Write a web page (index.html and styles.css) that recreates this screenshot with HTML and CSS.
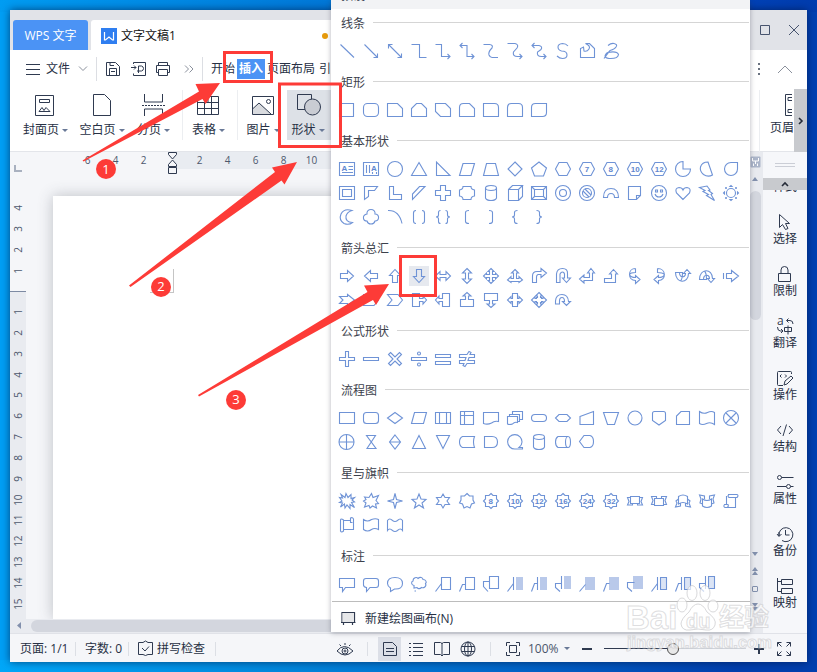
FILE: index.html
```html
<!DOCTYPE html>
<html lang="zh-CN">
<head>
<meta charset="utf-8">
<title>WPS 文字</title>
<link rel="stylesheet" href="styles.css">
</head>
<body>
<div class="window">
  <header class="titlebar">
    <div class="app-tab">WPS 文字</div>
    <div class="doc-tab">
      <svg class="logo" width="16" height="16"><rect width="16" height="16" fill="#2f7ef0"/><path d="M3.500 4v8h1l3.500-3 3.500 3h1v-8" fill="none" stroke="#fff" stroke-width="1.200"/></svg>
      <span>文字文稿1</span><i class="dot"></i>
    </div>
    <div class="win-buttons">
      <svg width="12" height="12"><path d="M1.500 1.500h9v9h-9z"/></svg>
      <svg width="12" height="12"><path d="M1 1l10 10M11 1L1 11"/></svg>
    </div>
  </header>
  <nav class="menubar">
    <svg class="burger" width="14" height="12"><path d="M0 1.500h14M0 6.500h14M0 11.500h14"/></svg>
    <span class="file">文件</span>
    <svg class="chev" width="10" height="6"><path d="M1 .5l4 4 4-4"/></svg>
    <i class="sep"></i>
    <svg class="tool" width="16" height="16"><path d="M1.500 1.500h9l4 4v9h-13zM4.500 14.500v-7h7v7M5 1.500v3h4M6 10.500h4"/></svg>
    <svg class="tool" width="16" height="16"><path d="M2.500 3v-1.500h12v13h-12v-2M0 6.500h5M3 4.500l2 2-2 2M7.500 12v-7h3q2 .5 2 2.500t-2 2.500H6"/></svg>
    <svg class="tool" width="16" height="16"><path d="M3.500 4.500v-3h9v3M3.500 11.500h-2v-7h13v7h-2M3.500 8.500h9v6h-9z"/></svg>
    <svg class="more" width="10" height="8"><path d="M1 .5l3.500 3.500L1 7.500M5.500.5L9 4 5.500 7.500"/></svg>
    <i class="sep"></i>
    <span class="tab start">开始</span><span class="tab active">插入</span><span class="tab layout">页面布局</span><span class="tab ref">引用</span>
    <span class="menu-right"><svg width="4" height="14"><path d="M1 1h2v2H1zM1 6h2v2H1zM1 11h2v2H1z" fill="#69717f" stroke="none"/></svg>
    <svg width="16" height="9"><path d="M1 8l7-7 7 7"/></svg></span>
  </nav>
  <section class="ribbon">
    <div class="tool-btn cover"><svg width="24" height="26"><path d="M3.500 3.500h18v20h-18zM7.500 7.500h10v3h-10zM7 19.500l3-4 2 3 2-3 4 4z"/></svg><b>封面页</b></div>
    <div class="tool-btn blank"><svg width="24" height="26"><path d="M3.500 2.500h11l6 6v15h-17z"/></svg><b>空白页</b></div>
    <div class="tool-btn break"><svg width="24" height="26"><path d="M3.500 2v8h18v-8M3.500 24v-7h18v7"/><path d="M1 13.500h23" stroke-dasharray="2 1"/></svg><b>分页</b></div>
    <div class="tool-btn table"><svg width="24" height="26"><path d="M1.500 4.500h21v18h-21zM1.500 10.500h21M1.500 16.500h21M8.500 10.500v12M15.500 4.500v18M12 4.500v6"/></svg><b>表格</b></div>
    <div class="tool-btn photo"><svg width="24" height="26"><path d="M1.500 17l7-6 12 11.500H1.500z" fill="#d9dbdf" stroke="none"/><path d="M1.500 4.500h21v18h-21zM1.500 17l6.500-6 12 11"/><circle cx="17.500" cy="9.500" r="2"/></svg><b>图片</b></div>
    <div class="tool-btn shape"><svg width="26" height="26"><path d="M2.500 2.500h14v15h-14z"/><circle cx="17.500" cy="15" r="8" fill="#c9ccd3"/></svg><b>形状</b></div>
    <div class="ribbon-right">
      <div class="head-btn"><svg width="8" height="23"><path d="M8 1.500H1.500v21H8M8 4.500H4v3h4M8 16.500H4v3h4"/></svg><span>页眉</span></div>
      <div class="next"><svg width="5" height="8"><path d="M1 1l3 3-3 3"/></svg></div>
    </div>
  </section>
  <main class="body">
    <div class="canvas">
      <div class="hruler">
        <span>6</span><span>4</span><span>2</span><span class="marker"><svg width="11" height="24"><path d="M1.500.5h8v2L5.500 7l-4-4.500zM5.500 8l4 4.500v2h-8v-2zM1.500 15.500h8v6h-8z" fill="#f5f6f9"/></svg></span><span>2</span><span>4</span><span>6</span><span>8</span><span>10</span>
      </div>
      <div class="doc-row">
        <div class="vruler">
          <div class="vmargin"><span>4</span><span>3</span><span>2</span><span>1</span></div>
          <div class="vtext"><span>1</span><span>2</span><span>3</span><span>4</span><span>5</span><span>6</span><span>7</span><span>8</span><span>9</span><span>10</span><span>11</span><span>12</span><span>13</span><span>14</span><span>15</span></div>
        </div>
        <div class="page"><i class="crop"></i></div>
      </div>
      <div class="hscroll"><svg width="5" height="8"><path d="M4 0v7L0 3.500z"/></svg><i></i></div>
    </div>
    <div class="vscroll">
      <svg class="view" width="11" height="12"><rect x=".5" y=".5" width="10" height="11" rx="1" fill="#abb5c9"/><path d="M2.500 2v3h6V2M3.500 10V7.500M7.500 10V7.500M5.500 5v3" fill="none" stroke="#fff"/></svg>
      <svg class="up" width="6" height="4"><path d="M0 4l3-4 3 4z"/></svg>
      <i class="thumb"></i>
      <svg class="down" width="6" height="4"><path d="M0 0l3 4 3-4z"/></svg>
      <svg class="dbl" width="6" height="8"><path d="M0 4l3-4 3 4zM0 8l3-4 3 4z"/></svg>
      <i class="ball"></i>
      <svg class="dbl2" width="6" height="8"><path d="M0 0l3 4 3-4zM0 4l3 4 3-4z"/></svg>
    </div>
    <aside class="side">
      <i class="grip"></i>
      <div class="side-up"><svg width="8" height="5"><path d="M1 4l3-3 3 3"/></svg></div>
      <div class="cut"><span>样式</span></div>
      <div class="side-item"><svg width="18" height="18"><path d="M3.500 1.500v13l3-3 3 5 2.500-1-2.500-5h4z"/></svg>选择</div>
      <div class="side-item"><svg width="18" height="18"><path d="M2.500 8.500h12v8h-12zM5 8.500V5q0-3.500 3.500-3.500T12 5v3.500"/></svg>限制</div>
      <div class="side-item"><svg width="18" height="18"><text x="1" y="8" font-size="12">a</text><path d="M8.500 10.500h7v4h-7zM12 8.500v9M17 7q0-3.500-3-3.500h-3M12.500 1.500l-2 2 2 2M1.500 10q0 4 3 4h2M5 12l2 2-2 2"/></svg>翻译</div>
      <div class="side-item"><svg width="18" height="18"><path d="M7 16.500H2.500q-1 0-1-1v-12q0-1 1-1h12q1 0 1 1V5M5.500 5.500L4 7l1.500 1.500M9 5.500L10.500 7 9 8.500M8 16l1-4 6-5 2 2-6 6z"/></svg>操作</div>
      <div class="side-item"><svg width="18" height="18"><path d="M5 5L1.500 9 5 13M13 5l3.500 4L13 13M10.500 3.500L7 15"/></svg>结构</div>
      <div class="side-item"><svg width="18" height="18"><path d="M5.500 4.500h12M1 13.500h9"/><circle cx="3.500" cy="4.500" r="2"/><circle cx="12.500" cy="13.500" r="2"/><path d="M14.500 13.500h3"/></svg>属性</div>
      <div class="side-item"><svg width="18" height="18"><path d="M3 11A7 7 0 1 1 6 15.500M3 11V7M1 9l2 2.500L5.500 9M9.500 5v5h4"/></svg>备份</div>
      <div class="side-item"><svg width="18" height="18"><path d="M1.500 1v13.500H5M1.500 4.500H5M5.500 2.500h11v5h-11zM5.500 11.500h11v5h-11z"/></svg>映射</div>
      <i class="side-line"></i>
    </aside>
  </main>
  <footer class="status">
    <span class="st pages">页面: 1/1</span><span class="st words">字数: 0</span>
    <span class="st spell"><svg width="16" height="15"><path d="M5 1.500H.5v12H5l2.500 1 2.500-1h4.500v-12H10L7.500 0zM4 7l3 3 4-4.500" /></svg>拼写检查</span>
    <svg class="eye" width="18" height="16"><path d="M1 10q7-9 16 0-8 8-16 0zM9 2v2M3.500 3.500L5 5M14.500 3.500L13 5"/><circle cx="9" cy="10" r="3"/><circle cx="9" cy="10" r="1"/></svg>
    <i class="ssep"></i>
    <span class="on"><svg width="16" height="16"><path d="M1.500 1.500h9l4 4v9h-13zM4 7.500h8M4 10.500h8"/></svg></span>
    <svg class="outline" width="16" height="16"><path d="M5 2.500h10M5 6.500h10M5 10.500h10M5 14.500h10M1 2.500h2M1 6.500h2M1 10.500h2M1 14.500h2"/></svg>
    <svg class="book" width="16" height="16"><path d="M.5 1.500h6l1.500 1 1.500-1h6v12H9.500L8 15l-1.500-1.500h-6zM8 2v13"/></svg>
    <svg class="globe" width="16" height="16"><circle cx="8" cy="8" r="7"/><ellipse cx="8" cy="8" rx="3.500" ry="7"/><path d="M1.500 5.500h13M1.500 10.500h13M8 1v14"/></svg>
    <i class="ssep two"></i>
    <svg class="fit" width="16" height="16"><path d="M1.500 5V1.500H5M11 1.500h3.500V5M14.500 11v3.500H11M5 14.500H1.500V11M4.500 4.500h7v7h-7z"/></svg>
    <span class="zoom">100%</span>
    <i class="minus"></i><div class="slider"><i class="knob"></i></div><i class="plus"></i>
    <svg class="full" width="16" height="16"><path d="M1.500 5.500v-4h4M1.500 1.500l4 4M10.500 1.500h4v4M14.500 1.500l-4 4M1.500 10.500v4h4M1.500 14.500l4-4M14.500 10.500v4h-4M14.500 14.500l-4-4"/></svg>
  </footer>
</div>

<div class="popup">
  <div class="preset"><span>预设</span></div>
  <section><h3>线条</h3><div class="shapes">
    <svg><path d="M1.500 1.500l13.500 13"/></svg>
    <svg><path d="M1.500 1.500l13 13M14.500 10.500v4h-4"/></svg>
    <svg><path d="M1.500 1.500l13 13M14.500 10.500v4h-4M1.500 5.500v-4h4"/></svg>
    <svg><path d="M.5 1.500h8v13h7"/></svg>
    <svg><path d="M.5 1.500h6v12h8.500M12.500 11l2.500 2.500-2.500 2.500"/></svg>
    <svg><path d="M1 2.500h7v11h7M3.500 0L1 2.500 3.500 5M12.500 11l2.500 2.500-2.500 2.500"/></svg>
    <svg><path d="M.5 1.500h6q4 .5 2.500 3.500Q5 9 6 12q1 2.500 3 2.500h6"/></svg>
    <svg><path d="M.5.5H8q4 1 2 4.500L6.500 9q-1 4.500 4 4.500h4M12.500 11l2.500 2.500-2.500 2.500"/></svg>
    <svg><path d="M1 2.500h7q4 1 2 4L6.500 9q-1 4.500 4 4.500h4.500M3.500 0L1 2.500 3.500 5M12.500 11l2.500 2.500-2.500 2.500"/></svg>
    <svg><path d="M13 3Q11 .5 7.500.5 3 1 3 4t3.500 4Q12 8 12 12q0 3.500-4.500 3.500-3 0-5.500-2.500"/></svg>
    <svg><path d="M1.500 14.500v-9L4.500 4l.5 4q3 1 5-2 2-3-3.500-5.500h4L15.500 5.500v9z"/></svg>
    <svg><path d="M5 2.500q3-2.500 6-2 4 1 2 3.500-1 2-6 3.500L1 15.500M4.500 9.500Q-1 14.500 6 15.500q9 .5 9.500-4Q14 7.500 4.500 9.500"/></svg>
  </div></section>
  <section><h3>矩形</h3><div class="shapes">
    <svg><path d="M.5 1.500h14v13H.5z"/></svg>
    <svg><rect x=".5" y="1.500" width="15" height="13" rx="4"/></svg>
    <svg><path d="M.5 1.500h10l5 5v8H.5z"/></svg>
    <svg><path d="M.5 14.500v-8l5-5h5l5 5v8z"/></svg>
    <svg><path d="M.5 1.500h10l5 5v8h-10l-5-5z"/></svg>
    <svg><path d="M.5 14.500v-9q0-4 4-4h6l5 5v8z"/></svg>
    <svg><path d="M.5 1.500h11q4 0 4 4v9H.5z"/></svg>
    <svg><path d="M.5 14.500v-9q0-4 4-4h7q4 0 4 4v9z"/></svg>
    <svg><path d="M4.500 1.500h11v9q0 4-4 4H.5v-9q0-4 4-4z"/></svg>
  </div></section>
  <section><h3>基本形状</h3><div class="shapes">
    <svg><path d="M.5 1.500h15v13H.5zM9.500 5.500H14M9.500 8.500H14M3 11.500h11"/><text x="2.500" y="9.500">A</text></svg>
    <svg><path d="M.5 1.500h15v13H.5zM3.500 4v8M6.500 4v8M9.500 11v2M13.500 11v2"/><text x="8" y="10">A</text></svg>
    <svg><circle cx="8" cy="8" r="7.500"/></svg>
    <svg><path d="M8 1.500l7.500 13H.5z"/></svg>
    <svg><path d="M1.500 1v13.500H15z"/></svg>
    <svg><path d="M4 2.500h11.500l-3.500 12H.5z"/></svg>
    <svg><path d="M3.500 2.500h9l3 12H.5z"/></svg>
    <svg><path d="M8 1l7 7-7 7-7-7z"/></svg>
    <svg><path d="M8 1l7.500 6-3 8h-9l-3-8z"/></svg>
    <svg><path d="M4 1.500h8L15.500 8 12 14.500H4L.5 8z"/></svg>
    <svg><path d="M4 1.500h8L15.500 8 12 14.500H4L.5 8z"/><text x="5.800" y="11">7</text></svg>
    <svg><path d="M4 1.500h8L15.500 8 12 14.500H4L.5 8z"/><text x="5.500" y="11">8</text></svg>
    <svg><path d="M4 1.500h8L15.500 8 12 14.500H4L.5 8z"/><text x="3.700" y="11">10</text></svg>
    <svg><path d="M4 1.500h8L15.500 8 12 14.500H4L.5 8z"/><text x="3.700" y="11">12</text></svg>
    <svg><path d="M8 .5V8h7.500A7.500 7.500 0 1 1 8 .5z"/></svg>
    <svg><path d="M9 1L13.500 14Q9 16.500 4.500 13.500 .5 10 1.500 6 3 1 9 1z"/></svg>
    <svg><path d="M14.500 1.500V8A6.500 6.500 0 1 1 8 1.500z"/></svg>
    <svg><path d="M.5 1.500h15v13H.5zM3.500 4.500h9v7h-9z"/></svg>
    <svg><path d="M1.500 14.500v-13h13l-3 4h-6v6z"/></svg>
    <svg><path d="M2.500 1.500h4v8h8v5h-12z"/></svg>
    <svg><path d="M1.500 14.500V9l7-7.500H14z"/></svg>
    <svg><path d="M5.500.5h5v5h5v5h-5v5h-5v-5h-5v-5h5z"/></svg>
    <svg><path d="M4 1.500h8q0 3 3.500 3.500v6q-3.500.5-3.500 3.500H4Q4 11.500.5 11V5Q4 4.500 4 1.500z"/></svg>
    <svg><ellipse cx="8" cy="3" rx="5.500" ry="2.500"/><path d="M2.500 3v10q1 2.500 5.500 2.500t5.500-2.500V3"/></svg>
    <svg><path d="M1.500 4.500h10v11h-10zM1.500 4.500l4-4h10l-4 4M15.500.5v11l-4 4"/></svg>
    <svg><path d="M.5 1.500h15v13H.5zM3.500 4.500h9v7h-9zM.5 1.500l3 3M15.500 1.500l-3 3M.5 14.500l3-3M15.500 14.500l-3-3"/></svg>
    <svg><circle cx="8" cy="8" r="7.500"/><circle cx="8" cy="8" r="3.500"/></svg>
    <svg><circle cx="8" cy="8" r="7.500"/><circle cx="8" cy="8" r="4.500"/><path d="M4 6l6 6M6 4l6 6"/></svg>
    <svg><path d="M.5 12.500Q.5 3.500 8 3.500t7.500 9h-4q0-4-3.500-4t-3.500 4z"/></svg>
    <svg><path d="M1.500 1.500h12v9l-4 4h-8zM9.500 14.500v-4h4"/></svg>
    <svg><circle cx="8" cy="8" r="7.500"/><path d="M4 9q1 3 4 3t4-3M4.500 5h2v2h-2zM9.500 5h2v2h-2z"/></svg>
    <svg><path d="M8 14.500L1.500 8Q-.5 3 4 2.500q3 0 4 2.500 1-2.500 4-2.500 4.500.5 2.500 5.500z"/></svg>
    <svg><path d="M.5 2.500L8 1l3 4-1.500.5 4 3-1.500 1 3.500 6-8-5 2-1-5.500-3 2-1z"/></svg>
    <svg><circle cx="8" cy="8" r="4.500"/><path d="M7 1.500l1-1 1 1zM7 14.500l1 1 1-1zM1.500 7l-1 1 1 1zM14.500 7l1 1-1 1zM2 3h2M3 2v2M12 3h2M13 2v2M2 13h2M3 12v2M12 13h2M13 12v2"/></svg>
    <svg><path d="M13 1.500Q5-1 2 5-.5 11 5 14.500q5 2 8.500-1Q6 13 7 7q1-4 6-5.500z"/></svg>
    <svg><path d="M4 5C3-1 13-1 12 5c5 0 4.500 7 0 7-1 4-7 4-8 0C-.500 12-1 6 4 5z"/></svg>
    <svg><path d="M1 1.500Q12 1 15 14.500"/></svg>
    <svg><path d="M5 1.500q-2.500 0-2.500 2.500v8q0 2.500 2.500 2.500M11 1.500q2.500 0 2.500 2.500v8q0 2.500-2.500 2.500"/></svg>
    <svg><path d="M5.500 1.500q-2 0-2 2V6q0 2-2.500 2 2.500 0 2.500 2v2.500q0 2 2 2M10.500 1.500q2 0 2 2V6q0 2 2.500 2-2.500 0-2.500 2v2.500q0 2-2 2"/></svg>
    <svg><path d="M10 1.500q-3.500 0-3.500 2v9q0 2 3.500 2"/></svg>
    <svg><path d="M6 1.500q3.500 0 3.500 2v9q0 2-3.500 2"/></svg>
    <svg><path d="M10.500 1.500q-3 0-3 2V6q0 2-2.500 2 2.500 0 2.500 2v2.500q0 2 3 2"/></svg>
    <svg><path d="M5.500 1.500q3 0 3 2V6q0 2 2.500 2-2.500 0-2.500 2v2.500q0 2-3 2"/></svg>
  </div></section>
  <section><h3>箭头总汇</h3><div class="shapes">
    <svg><path d="M1.500 5.500h7v-3L14.500 8l-6 5.500v-3h-7z"/></svg>
    <svg><path d="M14.500 5.500h-7v-3L1.500 8l6 5.500v-3h7z"/></svg>
    <svg><path d="M5.500 14.500v-7h-3L8 1.500l5.500 6h-3v7z"/></svg>
    <svg class="chosen"><path d="M5.500 1.500v7h-3L8 14.500l5.500-6h-3v-7z"/></svg>
    <svg><path d="M.5 8L5 3.500v3h6v-3L15.500 8 11 12.500v-3H5v3z"/></svg>
    <svg><path d="M8 .5L12.500 5h-3v6h3L8 15.500 3.500 11h3V5h-3z"/></svg>
    <svg><path d="M8 .5L11 3.500H9.500v3h3V5L15.500 8l-3 3V9.500h-3v3H11L8 15.500l-3-3h1.500v-3h-3V11L.5 8l3-3v1.500h3v-3H5z"/></svg>
    <svg><path d="M8 1.500L11.500 5h-2v5.500H12v-2l3.500 3.500-3.500 2.500v-1H4v1L.5 12 4 8.500v2h2.500V5h-2z"/></svg>
    <svg><path d="M1.500 14.500V8q0-4.500 4.500-4.500h4v-3L15.500 5 10 9.500v-3H7Q5.500 7 5.500 9v5.500z"/></svg>
    <svg><path d="M1.500 14.500V6Q2 .5 7.500.5T12.500 6v4h3L11.500 14.500 7.500 10h2V6q-.5-2-2-2t-2.500 2v8.500z"/></svg>
    <svg><path d="M12 .5L15.500 5h-2v7.500H5v2.500L.5 11 5 7v2.500h5.500V5h-2z"/></svg>
    <svg><path d="M10.500 1.500L14.500 6h-2v8.500H1.500v-4h7V6h-2z"/></svg>
    <svg><path d="M8.500.5C.5.5.5 12.500 8.500 12.500v3l4.500-4-4.500-4v2C5 9.500 3 8 2.500 6.500M8.500.5v4C5 4.500 3 5.500 2.500 6.500"/></svg>
    <svg><path d="M6.500.5c9 0 9 12 1 12v3l-4.500-4 4.500-4v2c3.500 0 5.500-1.500 6-3M6.500.5v4c4 0 6 1 7 2"/></svg>
    <svg><path d="M.5 4.500h4C4.500 10 10.500 10 10.500 5.500h-2l3.500-4 3.500 4h-2C13.500 16 .5 16 .5 4.500zM4.500 4.500h3c0 4-.500 7-2 8.500"/></svg>
    <svg><path d="M.5 11.500h4C4.500 6 10.500 6 10.500 10.500h-2l3.500 4 3.500-4h-2C13.500 0 .5 0 .5 11.500zM4.500 11.500h3c0-4-.500-7-2-8.500"/></svg>
    <svg><path d="M.5 5v6M3.500 5.500h5v-3l7 5.500-7 5.500v-3h-5z"/></svg>
    <svg><path d="M.5 4.500h8v-2L15.500 8l-7 5.500v-2h-8L4 8z"/></svg>
    <svg><path d="M.5 2.500H11L15.500 8 11 13.500H.5z"/></svg>
    <svg><path d="M.5 2.500H11L15.500 8 11 13.500H.5L5 8z"/></svg>
    <svg><path d="M1.500 1.500h7v5H12V4l3.500 4L12 12V9.500H8.500v5h-7z"/></svg>
    <svg><path d="M14.500 1.500h-7v5H4V4L.5 8 4 12V9.500h3.500v5h7z"/></svg>
    <svg><path d="M1.500 14.500v-7h5V4H4L8 .5 12 4H9.500v3.500h5v7z"/></svg>
    <svg><path d="M1.500 1.500v7h5V12H4l4 3.500 4-3.500H9.500V8.500h5v-7z"/></svg>
    <svg><path d="M5.500 1.500h5v5H12v-2L15.500 8 12 11.500v-2h-1.500v5h-5v-5H4v2L.5 8 4 4.500v2h1.500z"/></svg>
    <svg><path d="M8 .5L11.500 4h-2v1.500h1v1H12v-2L15.500 8 12 11.500v-2h-1.500v1h-1V12h2L8 15.500 4.500 12h2v-1.500h-1v-1H4v2L.5 8 4 4.500v2h1.500v-1h1V4h-2z"/></svg>
    <svg><path d="M.5 9Q1 2.500 7 2.500t6.500 7h2l-4 4-4-4h2q0-4-2.500-4T4.500 9v3h-4z"/></svg>
  </div></section>
  <section><h3>公式形状</h3><div class="shapes">
    <svg><path d="M6.500.5h3v6h6v3h-6v6h-3v-6h-6v-3h6z"/></svg>
    <svg><path d="M.5 6.500h15v3H.5z"/></svg>
    <svg><path d="M3.500 1.500L8 6l4.500-4.500 2 2L10 8l4.500 4.500-2 2L8 10l-4.500 4.500-2-2L6 8 1.500 3.500z"/></svg>
    <svg><path d="M.5 6.500h15v3H.5z"/><circle cx="8" cy="2.500" r="1.500"/><circle cx="8" cy="13.500" r="1.500"/></svg>
    <svg><path d="M.5 3.500h15v3H.5zM.5 10.500h15v3H.5z"/></svg>
    <svg><path d="M.5 3.500H8l2-3 2 1-1 2h4.500v3H10l-1 3h6.500v3H8l-2 3-2-1 1-2H.5v-3H6l1-3H.5z"/></svg>
  </div></section>
  <section><h3>流程图</h3><div class="shapes">
    <svg><path d="M.5 2.500h15v11H.5z"/></svg>
    <svg><rect x=".5" y="2.500" width="15" height="11" rx="3"/></svg>
    <svg><path d="M8 2.500L15.500 8 8 13.500.5 8z"/></svg>
    <svg><path d="M3.500 2.500h12l-3 11H.5z"/></svg>
    <svg><path d="M.5 2.500h15v11H.5zM4.500 2.500v11M11.500 2.500v11"/></svg>
    <svg><path d="M1.500 1.500h13v13h-13zM5.500 1.500v13M1.500 5.500h13"/></svg>
    <svg><path d="M.5 2.500h15v9q-4-1-7 1.500-4 2-8 .5z"/></svg>
    <svg><path d="M.5 6.500h10v6q-3-1-5 1.500-3 1-5 0zM2.500 6V4.500h10v7h-2M5.500 4V1.500h10v8h-3"/></svg>
    <svg><rect x=".5" y="4.500" width="15" height="7" rx="3.500"/></svg>
    <svg><path d="M4 4.500h8l3.500 3.500-3.500 3.500H4L.5 8z"/></svg>
    <svg><path d="M1 6.500l13.500-5v13H1z"/></svg>
    <svg><path d="M.5 2.500h15l-4 12h-7z"/></svg>
    <svg><circle cx="8" cy="8" r="7"/></svg>
    <svg><path d="M3.500 1.500h9q2 0 2 2v7L8 15l-6.500-4.500v-7q0-2 2-2z"/></svg>
    <svg><path d="M6 1.500h8.500v13h-13V6z"/></svg>
    <svg><path d="M.5 1.500q4 3 8 1t7 0v12q-4-3-8-1t-7 0z"/></svg>
    <svg><circle cx="8" cy="8" r="7.500"/><path d="M3 3l10 10M13 3L3 13"/></svg>
    <svg><circle cx="7.500" cy="8" r="7.500"/><path d="M7.500.5v15M0 8h15"/></svg>
    <svg><path d="M3.500 1.500h9L4 14.500h9z"/></svg>
    <svg><path d="M8 1l5.500 7L8 15 2.500 8zM2.500 8h11"/></svg>
    <svg><path d="M8 1.500l6.500 13h-13z"/></svg>
    <svg><path d="M8 14.500l6.500-13h-13z"/></svg>
    <svg><path d="M3.500 2.500h12q-2 5 0 11h-12Q.5 12 .5 8t3-5.500z"/></svg>
    <svg><path d="M1.500 2.500H9q5.500 0 5.500 5.500T9 13.500H1.500z"/></svg>
    <svg><path d="M15.500 13.500v1.500H8a7.200 7.200 0 1 1 7-7q0 3-3 5.500z"/></svg>
    <svg><ellipse cx="8" cy="3" rx="5.500" ry="2.500"/><path d="M2.500 3v10q1 2.500 5.500 2.500t5.500-2.500V3"/></svg>
    <svg><path d="M13 2.500H3Q.5 4 .5 8T3 13.500h10"/><ellipse cx="13" cy="8" rx="2.500" ry="5.500"/></svg>
    <svg><path d="M5 1.500h6q3.500 1 3.500 6T11 13.500H5L.5 7.500z"/></svg>
  </div></section>
  <section><h3>星与旗帜</h3><div class="shapes">
    <svg><path d="M2 1.500l4 3 1-4 2 4 3-3v4l3.500-1L13 7l2.500 2-3 .5 3 5-4.500-3 0 4L8 12l-2 3-.500-4-4 3 2-4-3-.5L3 8 .5 4.500l3 .5z"/></svg>
    <svg><path d="M1.500 4l4.500.5L8.500.5l1.500 4 5.500-2L13 7.500l2.500 3-3 .5 1 4-4-2L7 15l-1-2.500L1.500 14 3 10 .5 8 3 6.500z"/></svg>
    <svg><path d="M8 .5L9.500 6.500 15.500 8l-6 1.500L8 15.500 6.500 9.500.5 8l6-1.500z"/></svg>
    <svg><path d="M8 1l2 5 5 .5-4 3.500 1.500 5L8 12l-4.500 3L5 10 1 6.500 6 6z"/></svg>
    <svg><path d="M8 1l2 3.500h4.500L12 8l2.500 3.500H10L8 15l-2-3.500H1.500L4 8 1.500 4.500H6z"/></svg>
    <svg><path d="M8 .5l2.500 2.500h3.500v4l1.500 3-3 1-1.500 4L8 13.500l-3 1.500L3.500 11l-3-1L2 7V3h3.500z"/></svg>
    <svg><path d="M8 .5l2 2h3.500V6l2 2-2 2v3.500H10l-2 2-2-2H2.500V10L.5 8l2-2V2.500H6z"/><text x="5.500" y="11">8</text></svg>
    <svg><path d="M8 .5l2 2h3.500V6l2 2-2 2v3.500H10l-2 2-2-2H2.500V10L.5 8l2-2V2.500H6z"/><text x="3.700" y="11">10</text></svg>
    <svg><path d="M8 .5l2 2h3.500V6l2 2-2 2v3.500H10l-2 2-2-2H2.500V10L.5 8l2-2V2.500H6z"/><text x="3.700" y="11">12</text></svg>
    <svg><path d="M8 .5l2 2h3.500V6l2 2-2 2v3.500H10l-2 2-2-2H2.500V10L.5 8l2-2V2.500H6z"/><text x="3.700" y="11">16</text></svg>
    <svg><path d="M8 .5l2 2h3.500V6l2 2-2 2v3.500H10l-2 2-2-2H2.500V10L.5 8l2-2V2.500H6z"/><text x="3.700" y="11">24</text></svg>
    <svg><path d="M8 .5l2 2h3.500V6l2 2-2 2v3.500H10l-2 2-2-2H2.500V10L.5 8l2-2V2.500H6z"/><text x="3.700" y="11">32</text></svg>
    <svg><path d="M3.500 3.500h9v7h-9zM3.500 4.500h-3l1.500 4-1.500 3.500h5v-2M12.500 4.500h3l-1.500 4 1.500 3.500h-5v-2"/></svg>
    <svg><path d="M3.500 5.500h9v7h-9zM5.500 5.500v-2h-5L2 7.500l-1.500 4h3M10.500 5.500v-2h5L14 7.500l1.500 4h-3"/></svg>
    <svg><path d="M3.500 3.500q4.500-3 9 0v7.500q-4.500-3-9 0zM3.500 6L1 8l1 2-1.500 4 5-1v-3M12.500 6L15 8l-1 2 1.500 4-5-1v-3"/></svg>
    <svg><path d="M3.500 6q4.500 3 9 0v7q-4.500 3-9 0zM5.500 6V3l-5-1L2 6l-1 4 2.500 1M10.500 6V3l5-1L14 6l1 4-2.500 1"/></svg>
    <svg><path d="M5 1.500h9q2 1 0 3H6q-2-1.500 0-3M3.500 3v8.500M12.500 4.500v10H2q-2-1-.5-3H5q1 2-1 3"/></svg>
    <svg><path d="M1.500 3v11q1 2 3 0V3Q2 1 1.500 3zM4.500 3.500h7V1q2-1 3 1v10.500h-10M11.500 3.500v2h2"/></svg>
    <svg><path d="M.5 2.500q4 3 8 0 4-1.500 7 0v10q-4-2-7 0-4 3-8 0z"/></svg>
    <svg><path d="M.5 3.500q2-3 5 0 2.500 2 5 0 3-3 5 0v10q-2-3-5 0-2.500 2-5 0-3-3-5 0z"/></svg>
  </div></section>
  <section><h3>标注</h3><div class="shapes">
    <svg><path d="M.5 2.500h15v9H6.500l-3 4v-4h-3z"/></svg>
    <svg><path d="M3 2.500h10q2.500 0 2.500 2.500v4q0 2.500-2.500 2.500H7l-3.500 4v-4Q.5 11 .5 9V5Q.5 2.500 3 2.500z"/></svg>
    <svg><path d="M3.500 12Q.5 10 .5 7.500.5 1.500 8 1.500t7.500 6T7.500 13l-4 2.500z"/></svg>
    <svg><path d="M3 9.500C0 9 0 5.500 2 5c0-4 4-4 5-2.500 2-2 5-1 5 1 3 0 4 3 2.500 4 1.500 3-2 5-4 4-2 2-4 1-4.500 0L3 12zM3.500 15h1.500"/></svg>
    <svg><path d="M6.500 1.500h9v12h-9zM.5 15.500l6-8"/></svg>
    <svg><path d="M6.500 1.500h9v12h-9zM.5 15.500l3-7h3"/></svg>
    <svg><path d="M6.500.5h9v12h-9zM5 15.500l-4.500-5v-5h6"/></svg>
    <svg><path class="fill" d="M9 1h7v13H9z"/><path d="M6.500 1v13M.5 15.500l6-8"/></svg>
    <svg><path class="fill" d="M9 1h7v13H9z"/><path d="M6.500 1v13M.5 15.500l3-8h3"/></svg>
    <svg><path class="fill" d="M9 0h7v13H9z"/><path d="M6.500 0v13M5 15.500l-4.500-4v-4h6"/></svg>
    <svg><path class="fill" d="M6 1h10v13H6z"/><path d="M.5 15.500l6-7"/></svg>
    <svg><path class="fill" d="M6 1h10v13H6z"/><path d="M.5 15.500l3-8h3"/></svg>
    <svg><path class="fill" d="M6 0h10v13H6z"/><path d="M5 15.500l-4.500-4v-5h7"/></svg>
    <svg><path class="lite" d="M9.500 1.500h6v12h-6z"/><path d="M6.500 1v13M.5 15.500l6-8"/></svg>
    <svg><path class="lite" d="M9.500 1.500h6v12h-6z"/><path d="M6.500 1v13M.5 15.500l3-8h3"/></svg>
    <svg><path class="lite" d="M9.500.5h6v12h-6z"/><path d="M6.500 0v13M5 15.500l-4.500-4v-4h6"/></svg>
  </div></section>
  <div class="new-canvas"><svg width="16" height="16"><path d="M2 1.500h12.500v10H2zM3.500 11.500v2.500M12.500 11.500v2.500M1 11.500h14.500" stroke-width="1.200"/><path d="M2.500 2h11.500v9h-11.500z" fill="#e6e7e9" stroke="none"/></svg>新建绘图画布(N)</div>
</div>

<div class="watermark">
  <svg class="paw" width="46" height="52"><ellipse cx="6" cy="21" rx="5" ry="7"/><ellipse cx="16" cy="9" rx="5" ry="7.500"/><ellipse cx="29" cy="9" rx="5" ry="7.500"/><ellipse cx="37" cy="22" rx="5" ry="6"/><path d="M22 20q5 0 9 8 10 7 8 13-2 6-9 5-8-2-16 0-8 1-9-6 0-5 8-12 4-8 9-8z"/></svg>
  <span class="wm-bai">Bai</span><span class="wm-du">du</span><span class="wm-cn">经验</span><span class="wm-url">jingyan.baidu.com</span>
</div>

<svg class="marks" width="817" height="672">
  <g fill="none" stroke="#fd3b37" stroke-width="3"><path d="M224.500 52.500h47v29h-47z"/><path d="M279.500 84h61v62.500h-61z"/><path d="M400.500 256.500h35v39h-35z"/></g>
  <g fill="#fd3b37"><path d="M82.500 160.500L199 91.500l-3.500-7.500 24.500-1-14.500 21-3-5-119 62.500z"/><path d="M129 285.500L275 172l-3-4.500 25-5.500-12.500 22.500-3-4L130.500 287z"/><path d="M198 395L367.500 292l-3.500-6.500 25-1.500-13 21-3-5L199 396.500z"/>
  <circle cx="106" cy="169" r="10"/><circle cx="161" cy="287" r="10"/><circle cx="236" cy="400" r="10"/></g>
  <g class="nums"><text x="106" y="173.500">1</text><text x="161" y="291">2</text><text x="236" y="404">3</text></g>
</svg>
</body>
</html>
```

FILE: styles.css
```css
* { box-sizing: border-box; }
body {
  margin: 0; width: 817px; height: 672px; overflow: hidden; padding: 10px;
  position: relative; font: 12px/16px "Open Sans", "Noto Sans CJK SC", sans-serif; color: #273044;
  background:
    linear-gradient(90deg, #009cf2 0, #0078d8 40%, #0046bd 85%, #003cae 100%) 0 0 / 100% 12px no-repeat,
    linear-gradient(90deg, #00a7f8 0, #0087dc 35%, #0069cb 60%, #003fae 90%) 0 100% / 100% 12px no-repeat,
    linear-gradient(90deg, #009ff5 0, #009ff5 50%, #0040b2 50%, #0040b2 100%);
}
svg { display: block; flex: none; fill: none; stroke: #2f3a50; stroke-width: 1; overflow: visible; }
svg text { stroke: none; }
i, b { font-style: normal; font-weight: normal; flex: none; }

.window { width: 797px; height: 652px; display: flex; flex-direction: column; background: #f5f6f9; box-shadow: 0 0 8px rgba(0, 20, 60, .65); }

.titlebar { height: 40px; flex: none; display: flex; align-items: flex-end; background: #e1e3e8; padding-left: 3px; }
.app-tab { width: 75px; height: 30px; margin-right: 3px; border-radius: 3px 3px 0 0; background: #4b93f5; color: #fff; text-align: center; line-height: 32px; white-space: nowrap; }
.doc-tab { width: 260px; height: 30px; background: #fff; border-radius: 3px 0 0 0; display: flex; align-items: center; padding: 1px 0 0 10px; color: #111; }
.logo { stroke: none; margin-right: 4px; }
.dot { width: 6px; height: 6px; border-radius: 50%; background: #e69a0c; margin-left: 146px; }
.win-buttons { margin-left: auto; height: 40px; display: flex; align-items: center; gap: 17px; padding-right: 7px; }
.win-buttons svg { stroke: #47546e; }

.menubar { height: 38px; flex: none; background: #fff; display: flex; align-items: center; padding: 0 0 0 16px; white-space: nowrap; }
.burger { margin-right: 6px; }
.file { width: 24px; margin-right: 8px; }
.chev, .more, .menu-right svg { stroke: #8a909c; }
.chev { margin-right: 8px; }
.sep { width: 1px; height: 24px; background: #dcdee3; }
.tool { margin-left: 8px; }
.tool + .tool { margin-left: 10px; }
.tool + .tool + .tool { margin-left: 8px; }
.more { margin: 0 8px 0 13px; }
.start { width: 24px; margin-left: 8px; }
.active { background: #4b93f5; color: #fff; font-weight: 700; width: 28px; height: 20px; line-height: 20px; text-align: center; margin: 0 2px; }
.layout { width: 48px; margin-right: 4px; }
.menu-right { margin-left: auto; display: flex; align-items: center; gap: 16px; padding-right: 14px; }

.ribbon { height: 64px; flex: none; background: #fff; display: flex; border-bottom: 1px solid #e3e5ea; padding: 2px 0 0 9px; }
.tool-btn { height: 50px; flex: none; display: flex; flex-direction: column; align-items: center; }
.tool-btn svg { margin: 2px 4px 3px 0; }
.tool-btn b { white-space: nowrap; display: flex; align-items: center; gap: 3px; margin-top: 1px; }
.tool-btn b::after, .zoom::after { content: ""; border: 3px solid transparent; border-top-color: #697997; border-bottom: 0; }
.cover { width: 53px; }
.cover svg { margin-right: 3px; }
.blank { width: 60px; }
.blank svg { margin-right: 0; }
.break { width: 43px; margin: 0 7px 0 0; }
.break svg { margin-right: 2px; }
.table { width: 55px; border-left: 1px solid #eceef1; padding-right: 3px; }
.table svg, .photo svg { margin-right: 1px; }
.photo { width: 50px; border-left: 1px solid #eceef1; padding-left: 1px; }
.shape { width: 50px; background: #dde1e7; padding-right: 8px; }
.shape svg { margin-right: 0; }
.ribbon-right { margin-left: auto; height: 62px; display: flex; border-left: 1px solid #eceef1; }
.head-btn { width: 33px; overflow: hidden; padding: 3px 0 0 10px; }
.head-btn svg { margin: 0 0 4px 14px; }
.head-btn span { white-space: nowrap; }
.next { width: 13px; margin: -1px 0 0 1px; background: #c8cace; display: flex; align-items: center; justify-content: center; }
.next svg, .side-up svg { stroke: #252b38; stroke-width: 1.6; }

.body { height: 481px; flex: none; display: flex; }
.canvas { width: 740px; display: flex; flex-direction: column; overflow: hidden; }
.hruler { height: 17px; flex: none; width: 740px; display: flex; padding-left: 63px; background: linear-gradient(90deg, #f5f6f9 162px, #e9ecf1 162px); font-size: 10px; color: #4d586d; }
.hruler span { width: 28px; text-align: center; line-height: 16px; padding-left: 1px; }
.hruler .marker { display: flex; justify-content: center; padding-left: 2px; z-index: 1; }
.doc-row { height: 450px; flex: none; display: flex; }
.vruler { width: 16px; flex: none; padding-top: 29px; color: #4d586d; font-size: 10px; position: relative; }
.vruler::before { content: ""; position: absolute; left: 4px; top: -4px; width: 6px; height: 5px; border: solid #a9b1c0; border-width: 0 0 2px 2px; }
.vruler span { height: 20.85px; width: 16px; display: flex; align-items: center; justify-content: center; writing-mode: vertical-rl; transform: rotate(180deg); line-height: 16px; }
.vmargin { height: 94px; border-bottom: 1px solid #7d8aa3; }
.vtext { height: 327px; padding-top: 10px; background: #e9ebf0; }
.page { width: 697px; margin: 27px 0 0 27px; background: #fff; box-shadow: 0 0 14px rgba(60, 65, 80, .3); position: relative; }
.crop { position: absolute; left: 97px; top: 73px; width: 24px; height: 24px; border-right: 1px solid #c5c5c5; background: linear-gradient(#c5c5c5, #c5c5c5) 0 100% / 100% 1px no-repeat; }
.hscroll { height: 14px; flex: none; background: #e9ebf0; display: flex; align-items: center; gap: 9px; padding-left: 7px; position: relative; }
.hscroll svg, .vscroll svg { fill: #8290ad; stroke: none; }
.hscroll i { width: 700px; height: 12px; border-radius: 6px; background: #d3d6de; }

.vscroll { width: 13px; background: #e8eaef; display: flex; flex-direction: column; align-items: center; padding: 4px 3px 0 0; }
.vscroll .view { margin-bottom: 9px; }
.vscroll .thumb { width: 11px; height: 129px; border-radius: 6px; background: #d3d6de; margin-top: 10px; }
.vscroll .down { margin-top: 232px; }
.vscroll .dbl { margin-top: 11px; }
.vscroll .ball { width: 6px; height: 6px; border: 1px solid #8290ad; border-radius: 1px; margin: 11px 0; }

.side { width: 44px; background: #f6f7fa; display: flex; flex-direction: column; align-items: center; }
.grip { width: 20px; height: 4px; border: solid #cbced6; border-width: 1px 0; margin: 11px 0 11px; }
.side-up { width: 44px; height: 12px; flex: none; background: #c8cace; display: flex; align-items: center; justify-content: center; }
.cut { height: 3px; flex: none; overflow: hidden; margin-bottom: 20px; }
.cut span { display: block; margin-top: -11px; }
.side-item { height: 52px; flex: none; display: flex; flex-direction: column; align-items: center; line-height: 16px; white-space: nowrap; }
.side-item text { fill: #2f3a50; font-family: "Open Sans", sans-serif; }
.side-line { width: 34px; height: 1px; background: #dcdfe5; margin-top: 4px; }

.status { height: 29px; flex: none; border-top: 1px solid #e0e2e8; background: #f5f6f9; display: flex; align-items: center; white-space: nowrap; padding-top: 1px; }
.st { height: 14px; display: flex; align-items: center; border-right: 1px solid #dcdfe5; }
.pages { width: 66px; padding-left: 10px; }
.words { width: 53px; padding-left: 9px; }
.spell { width: 87px; padding-left: 9px; gap: 3px; }
.eye { margin-left: 120px; }
.ssep { width: 1px; height: 14px; background: #dcdfe5; margin: 0 10px 0 13px; }
.on { width: 23px; height: 24px; background: #dcdfe7; display: flex; align-items: center; justify-content: center; margin-right: 7px; }
.book, .globe { margin-left: 10px; }
.ssep.two { margin: 0 14px 0 14px; }
.zoom { display: flex; align-items: center; gap: 5px; width: 42px; margin: 0 12px 0 7px; color: #4a556b; }
.minus { width: 10px; height: 2px; background: #2f3a50; }
.slider { width: 142px; height: 12px; margin: 0 8px 0 12px; background: linear-gradient(90deg, #2f3a50 69px, #cfd3da 69px) 0 50% / 100% 1px no-repeat; padding-left: 63px; }
.knob { display: block; width: 12px; height: 12px; border: 1px solid #4c4c4c; border-radius: 50%; background: #e8e8e8; }
.plus { width: 10px; height: 10px; background: linear-gradient(#2f3a50, #2f3a50) 50% / 10px 2px no-repeat, linear-gradient(#2f3a50, #2f3a50) 50% / 2px 10px no-repeat; margin-right: 12px; }

.popup { position: absolute; left: 331px; top: 0; width: 419px; height: 632px; background: #fff; box-shadow: 0 1px 5px rgba(40, 45, 60, .35); overflow: hidden; }
.preset { height: 9px; background: #f2f3f5; overflow: hidden; padding-left: 10px; display: flex; align-items: flex-start; line-height: 16px; margin-bottom: 3px; }
.preset span { margin-top: -12px; }
.popup section { margin-bottom: 8px; }
.popup h3 { height: 21px; margin: 0 1px 6px 10px; padding-top: 2px; display: flex; align-items: center; gap: 8px; font-size: 12px; line-height: 19px; font-weight: 400; color: #3c414c; white-space: nowrap; }
.popup h3::after { content: ""; flex: 1; height: 1px; margin-top: -2px; background: #d5d5d5; }
.shapes { display: grid; grid-template-columns: repeat(17, 24px); grid-auto-rows: 24px; place-items: center; margin-left: 4px; width: 408px; }
.shapes svg { width: 16px; height: 16px; stroke: #6f93d6; stroke-width: 1.1; }
.shapes .chosen { box-shadow: 0 0 0 2px #e6e9ef; background: #e6e9ef; }
.shapes text { fill: #5f87cf; font: 700 8px/1 "Liberation Sans", sans-serif; }
.shapes .fill { fill: #b9c9ea; stroke: none; }
.shapes .lite { fill: #dbe4f5; }
.new-canvas { height: 36px; margin-top: -3px; border-top: 1px solid #bcbcbc; margin-left: 1px; display: flex; align-items: center; padding: 0 0 2px 8px; gap: 9px; }

.watermark { position: absolute; left: 626px; top: 580px; width: 150px; height: 75px; font-family: "Liberation Sans", "Noto Sans CJK SC", sans-serif; font-weight: 700; color: rgba(255, 255, 255, .75); -webkit-text-stroke: 1px rgba(195, 195, 198, .6); white-space: nowrap; opacity: .9; }
.watermark span { position: absolute; line-height: 1; }
.paw { position: absolute; left: 50px; top: 4px; fill: rgba(255, 255, 255, .75); stroke: rgba(195, 195, 198, .7); }
.wm-bai { left: 0; top: 21px; font-size: 33px; }
.wm-du { left: 60px; top: 31px; font-size: 20px; }
.wm-cn { left: 93px; top: 25px; font-size: 25px; }
.wm-url { left: 1px; top: 54px; font-size: 16.5px; }

.marks { position: absolute; left: 0; top: 0; stroke: none; }
.nums { fill: #fff; font: 13px "Open Sans", sans-serif; text-anchor: middle; }
```
